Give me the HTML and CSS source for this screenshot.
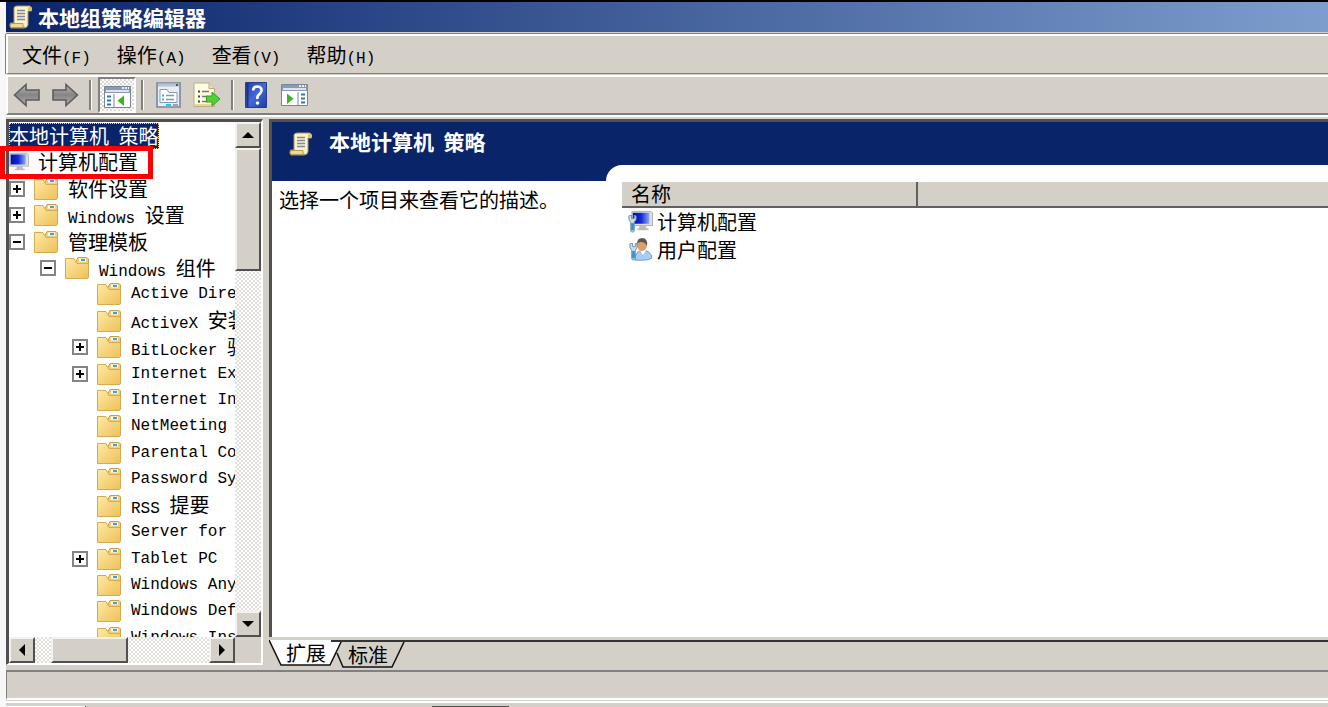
FILE: index.html
```html
<!DOCTYPE html>
<html lang="zh-CN">
<head>
<meta charset="UTF-8">
<meta name="viewport" content="width=device-width, initial-scale=1.0">
<title>本地组策略编辑器</title>
<link rel="stylesheet" href="styles.css">
</head>
<body>
    <!-- Shared icons -->
    <svg class="defs" aria-hidden="true">
        <defs>
            <linearGradient id="gold" x1="0" y1="0" x2="1" y2="1">
                <stop offset="0" stop-color="#ffeaa6"/>
                <stop offset="1" stop-color="#edc057"/>
            </linearGradient>
            <linearGradient id="grey" x1="0" y1="0" x2="0" y2="1">
                <stop offset="0" stop-color="#b8b8b8"/>
                <stop offset="0.5" stop-color="#858585"/>
                <stop offset="1" stop-color="#b0b0b0"/>
            </linearGradient>
            <linearGradient id="blue" x1="0" y1="0" x2="1" y2="1">
                <stop offset="0" stop-color="#1b3fae"/>
                <stop offset="0.5" stop-color="#4468d8"/>
                <stop offset="1" stop-color="#1d3c9c"/>
            </linearGradient>
            <linearGradient id="screen" x1="0" y1="0" x2="1" y2="0">
                <stop offset="0" stop-color="#0010b0"/>
                <stop offset="0.5" stop-color="#1028d8"/>
                <stop offset="1" stop-color="#8fa8f4"/>
            </linearGradient>
        </defs>
        <symbol id="folder" viewBox="0 0 24 22">
            <path d="M11 4.500 L13 0.500 H22 L23.500 2 V19 H11Z" fill="#f0cf78" stroke="#c9a04a"/>
            <path d="M14 3h7" stroke="#fff" stroke-width="3"/>
            <path d="M16 3h4" stroke="#3f9fe0" stroke-width="2"/>
            <path d="M0.500 1.500H9L12 6.500H23.500V20.500L22.500 21.500H0.500Z" fill="url(#gold)" stroke="#d5aa50"/>
        </symbol>
        <symbol id="scroll" viewBox="0 0 24 24">
            <path d="M5 2.500Q6 1 8 1H21Q23.500 2 22.500 6H19V20Q18 23 15 23H2Q0 21 1.500 18H5Z" fill="#fbf2c8" stroke="#a8966a"/>
            <path d="M19 6V3Q20 1 22 2Q24 4 22 6Z" fill="#d8c078"/>
            <path d="M2 18.500H14Q13 22 16 22.500H2Q0.500 21 2 18.500Z" fill="#efd995" stroke="#b39b60"/>
            <path d="M8 5.500h8M8 8.500h8M8 11.500h8M8 14.500h8" stroke="#7f88a5" stroke-width="1.400"/>
        </symbol>
        <symbol id="monitor" viewBox="0 0 24 22">
            <path d="M1 0.500H21L23.500 2V16H1Z" fill="#dedede" stroke="#aaa"/>
            <path d="M2 2H20V14H2Z" fill="url(#screen)"/>
            <path d="M9 16h7l1 3h2v2H7v-2h2Z" fill="#bdbdbd"/>
        </symbol>
        <symbol id="wrench" viewBox="0 0 10 20">
            <path d="M1 1v4l2 3v9q0 2 2 2t2-2V8l2-3V1L7 0v4H4V0Z" fill="#c9dce8" stroke="#72899a"/>
            <path d="M5 9v8" stroke="#2d8fd8" stroke-width="3"/>
        </symbol>
    </svg>

    <div class="window">
        <header class="title-bar">
            <svg class="icon-24"><use href="#scroll"/></svg>
            <h1>本地组策略编辑器</h1>
        </header>

        <nav class="menu-bar">
            <button>文件<span class="en">(F)</span></button>
            <button>操作<span class="en">(A)</span></button>
            <button>查看<span class="en">(V)</span></button>
            <button>帮助<span class="en">(H)</span></button>
        </nav>

        <div class="tool-bar">
            <button class="tool" aria-label="后退">
                <svg width="28" height="26" viewBox="0 0 28 26"><path d="M1.500 13 L13 2.500V8H26V18H13V23.500Z" fill="url(#grey)" stroke="#5c5c5c" stroke-width="1.600"/></svg>
            </button>
            <button class="tool forward" aria-label="前进">
                <svg width="28" height="26" viewBox="0 0 28 26"><path d="M26.500 13 L15 2.500V8H2V18H15V23.500Z" fill="url(#grey)" stroke="#5c5c5c" stroke-width="1.600"/></svg>
            </button>
            <span class="separator"></span>
            <button class="tool pressed" aria-label="显示/隐藏控制台树">
                <svg width="27" height="22" viewBox="0 0 27 22">
                    <path d="M0.500 0.500H26.500V21.500H0.500Z" fill="#fff" stroke="#78869a"/>
                    <path d="M1 1H26V7H1Z" fill="#8a9ab2"/>
                    <path d="M2 5H25" stroke="#dce4ee" stroke-width="2"/>
                    <path d="M18 2h2M21 2h2M24 2h1" stroke="#e8f0fa" stroke-width="2"/>
                    <path d="M10 8V21" stroke="#78869a"/>
                    <path d="M3 10.500h4M3 14.500h4M3 18.500h4" stroke="#2d74c8" stroke-width="2"/>
                    <path d="M20 9.500V20L13.500 14.700Z" fill="#3bb51f"/>
                </svg>
            </button>
            <span class="separator"></span>
            <button class="tool properties" aria-label="属性">
                <svg width="25" height="26" viewBox="0 0 25 26">
                    <path d="M1 1H24V25H1Z" fill="#e6edf6" stroke="#78869a" stroke-width="1.600"/>
                    <path d="M2 3H23" stroke="#b4c2d4" stroke-width="3"/>
                    <path d="M20 3h2" stroke="#556" stroke-width="2"/>
                    <path d="M4 7.500H11L13 10.500H21V20.500H4Z" fill="#fff" stroke="#8b98b0"/>
                    <path d="M10 13.500h8M10 17.500h8" stroke="#8393b5" stroke-width="1.500"/>
                    <path d="M6 13.500h2M6 17.500h2" stroke="#27b7df" stroke-width="2"/>
                    <path d="M10 23h5" stroke="#20c8ee" stroke-width="2"/><path d="M17 23h5" stroke="#98a5b5" stroke-width="2"/>
                </svg>
            </button>
            <button class="tool export" aria-label="导出列表">
                <svg width="28" height="26" viewBox="0 0 28 26">
                    <path d="M1 1H16L21.500 6.500V24.500H1Z" fill="#fffbe0" stroke="#b9af86"/>
                    <path d="M16 1V6.500H21.500" fill="#e8dfb8" stroke="#b9af86"/>
                    <path d="M2 23H21" stroke="#e8d999" stroke-width="2"/>
                    <path d="M5 9.500h2M5 14.500h2M5 19.500h2" stroke="#444" stroke-width="2"/>
                    <path d="M9 9.500h7M9 14.500h6M9 19.500h6" stroke="#777" stroke-width="1.400"/>
                    <path d="M13.500 14H19V10L27 17L19 24V20H13.500Z" fill="#55cf35" stroke="#37a023"/>
                </svg>
            </button>
            <span class="separator"></span>
            <button class="tool help" aria-label="帮助">
                <svg width="22" height="26" viewBox="0 0 22 26">
                    <path d="M0.500 0.500H21.500V25.500H0.500Z" fill="url(#blue)" stroke="#263e91"/>
                    <path d="M2.500 1V25" stroke="#1c327f" stroke-width="2"/>
                    <path d="M8 8.500Q8.500 4.500 12.500 4.500Q17 5 16.500 9Q16 11 13.500 13Q12 14.500 12.500 17" fill="none" stroke="#fff" stroke-width="2.600"/>
                    <circle cx="12.500" cy="21" r="1.800" fill="#fff"/>
                </svg>
            </button>
            <button class="tool action-pane" aria-label="显示/隐藏操作窗格">
                <svg width="27" height="22" viewBox="0 0 27 22">
                    <path d="M0.500 0.500H26.500V21.500H0.500Z" fill="#fff" stroke="#78869a"/>
                    <path d="M1 1H26V7H1Z" fill="#8a9ab2"/>
                    <path d="M2 5H25" stroke="#dce4ee" stroke-width="2"/>
                    <path d="M18 2h2M21 2h2M24 2h1" stroke="#e8f0fa" stroke-width="2"/>
                    <path d="M17 8V21" stroke="#78869a"/>
                    <path d="M20 10.500h4M20 14.500h4M20 18.500h4" stroke="#2d74c8" stroke-width="2"/>
                    <path d="M6 9.500V20L12.500 14.700Z" fill="#3bb51f"/>
                </svg>
            </button>
        </div>

        <main class="workspace">
            <!-- Console tree -->
            <section class="tree-pane">
                <div class="tree-view">
                    <ul class="tree">
                        <li class="root"><span class="selected">本地计算机<span class="en"> </span>策略</span></li>
                        <li class="computer"><svg class="monitor-icon"><use href="#monitor"/></svg>计算机配置</li>
                        <li><button class="toggle" aria-label="展开"></button><svg class="folder"><use href="#folder"/></svg>软件设置</li>
                        <li><button class="toggle" aria-label="展开"></button><svg class="folder"><use href="#folder"/></svg><span><span class="en">Windows </span>设置</span></li>
                        <li><button class="toggle minus" aria-label="折叠"></button><svg class="folder"><use href="#folder"/></svg>管理模板</li>
                        <li class="level-2"><button class="toggle minus" aria-label="折叠"></button><svg class="folder"><use href="#folder"/></svg><span><span class="en">Windows </span>组件</span></li>
                        <li class="level-3"><span class="no-toggle"></span><svg class="folder"><use href="#folder"/></svg><span class="en">Active Dire</span></li>
                        <li class="level-3"><span class="no-toggle"></span><svg class="folder"><use href="#folder"/></svg><span><span class="en">ActiveX </span>安装</span></li>
                        <li class="level-3"><button class="toggle" aria-label="展开"></button><svg class="folder"><use href="#folder"/></svg><span><span class="en">BitLocker </span>驱</span></li>
                        <li class="level-3"><button class="toggle" aria-label="展开"></button><svg class="folder"><use href="#folder"/></svg><span class="en">Internet Ex</span></li>
                        <li class="level-3"><span class="no-toggle"></span><svg class="folder"><use href="#folder"/></svg><span class="en">Internet In</span></li>
                        <li class="level-3"><span class="no-toggle"></span><svg class="folder"><use href="#folder"/></svg><span class="en">NetMeeting</span></li>
                        <li class="level-3"><span class="no-toggle"></span><svg class="folder"><use href="#folder"/></svg><span class="en">Parental Co</span></li>
                        <li class="level-3"><span class="no-toggle"></span><svg class="folder"><use href="#folder"/></svg><span class="en">Password Sy</span></li>
                        <li class="level-3"><span class="no-toggle"></span><svg class="folder"><use href="#folder"/></svg><span><span class="en">RSS </span>提要</span></li>
                        <li class="level-3"><span class="no-toggle"></span><svg class="folder"><use href="#folder"/></svg><span class="en">Server for</span></li>
                        <li class="level-3"><button class="toggle" aria-label="展开"></button><svg class="folder"><use href="#folder"/></svg><span class="en">Tablet PC</span></li>
                        <li class="level-3"><span class="no-toggle"></span><svg class="folder"><use href="#folder"/></svg><span class="en">Windows Any</span></li>
                        <li class="level-3"><span class="no-toggle"></span><svg class="folder"><use href="#folder"/></svg><span class="en">Windows Def</span></li>
                        <li class="level-3"><span class="no-toggle"></span><svg class="folder"><use href="#folder"/></svg><span class="en">Windows Ins</span></li>
                    </ul>
                </div>
                <div class="scroll-y">
                    <button class="scroll-button" aria-label="向上"><svg width="12" height="6"><path d="M0 6L6 0L12 6Z"/></svg></button>
                    <div class="thumb"></div>
                    <button class="scroll-button" aria-label="向下"><svg width="12" height="6"><path d="M0 0L6 6L12 0Z"/></svg></button>
                </div>
                <div class="scroll-x">
                    <button class="scroll-button" aria-label="向左"><svg width="6" height="12"><path d="M6 0L0 6L6 12Z"/></svg></button>
                    <div class="thumb"></div>
                    <button class="scroll-button" aria-label="向右"><svg width="6" height="12"><path d="M0 0L6 6L0 12Z"/></svg></button>
                </div>
            </section>
            <div class="highlight"></div>

            <!-- Result pane -->
            <section class="result-pane">
                <div class="result-view">
                    <div class="result-title">
                        <svg class="icon-24"><use href="#scroll"/></svg>
                        <h2>本地计算机<span class="en"> </span>策略</h2>
                    </div>
                    <div class="result-body">
                        <p class="description">选择一个项目来查看它的描述。</p>
                        <div class="list">
                            <table>
                                <thead>
                                    <tr><th class="name-column" scope="col">名称</th><th></th></tr>
                                </thead>
                                <tbody>
                                    <tr><td colspan="2"><div class="item">
                                        <svg width="26" height="24" viewBox="0 0 26 24"><use href="#monitor" x="3" width="22" height="22"/><use href="#wrench" y="5" width="9" height="18"/></svg>计算机配置
                                    </div></td></tr>
                                    <tr><td colspan="2"><div class="item">
                                        <svg width="26" height="24" viewBox="0 0 26 24">
                                            <path d="M7 22Q7 13 15 12Q23 13 24 20Q20 23 7 22Z" fill="#a7cdf2" stroke="#729fc8"/>
                                            <path d="M12 12L15 17L18 12Z" fill="#fff"/>
                                            <ellipse cx="14" cy="7" rx="5" ry="6" fill="#d99f6e"/>
                                            <path d="M9 6Q9 0 14 0Q20 0 19 8Q17 4 13 4Q10 4 9 6Z" fill="#64564a"/>
                                            <use href="#wrench" x="1" y="5" width="9" height="18"/>
                                        </svg>用户配置
                                    </div></td></tr>
                                </tbody>
                            </table>
                        </div>
                    </div>
                </div>
                <div class="tabs">
                    <button class="tab">
                        <svg width="74" height="26" viewBox="0 0 74 26"><path d="M0 0L12 25H61L73 0" fill="#fff"/><path d="M0 0L12 25H61L73 0" fill="none" stroke="#111" stroke-width="1.500"/></svg>
                        <span>扩展</span>
                    </button>
                    <button class="tab second">
                        <svg width="74" height="26" viewBox="0 0 74 26"><path d="M6 11L12 25H61L73 0" fill="none" stroke="#111" stroke-width="1.500"/></svg>
                        <span>标准</span>
                    </button>
                    <div class="tabs-rest"></div>
                </div>
            </section>
        </main>

        <footer class="status-bar"></footer>
        <div class="bottom-strip"><span class="light"></span><span class="dark"></span></div>
    </div>
</body>
</html>
```
FILE: styles.css
```css
* {
    box-sizing: border-box;
}

body, html {
    height: 100%;
    margin: 0;
    overflow: hidden;
}

body {
    background: #f7f7f7;
    color: #000;
    font-family: "Noto Sans CJK SC", sans-serif;
    font-size: 20px;
    line-height: 26px;
    border-top: 2px solid #000;
}

button {
    font: inherit;
    color: inherit;
    background: none;
    border: none;
    padding: 0;
    margin: 0;
}

svg {
    display: block;
    flex-shrink: 0;
}

h1, h2, p, ul {
    margin: 0;
    padding: 0;
}

h1, h2 {
    font-size: 21px;
    line-height: 26px;
    font-weight: bold;
}

/* Half-width text */
.en {
    font-family: "Liberation Mono", monospace;
    font-size: 16px;
    line-height: 20px;
    white-space: pre;
}

.defs {
    position: absolute;
    width: 0;
    height: 0;
}

.icon-24 {
    width: 24px;
    height: 24px;
}

.window {
    display: flex;
    flex-direction: column;
    height: 100%;
    margin-left: 6px;
    background: #d4d0c8;
}

/* Title bar */
.title-bar {
    display: flex;
    align-items: center;
    gap: 5px;
    height: 30px;
    padding: 0 3px;
    color: #fff;
    background: linear-gradient(to right, #0a246a, #7d9ecd);
}

/* Menu and toolbar */
.menu-bar {
    display: flex;
    align-items: center;
    gap: 26px;
    height: 40px;
    margin-top: 2px;
    padding: 2px 14px 0;
    border: 2px solid #fff;
    border-width: 2px 0 0 2px;
    border-bottom: 1px solid #808080;
    box-shadow: 0 -1px #808080, -1px 0 #808080;
}

.tool-bar {
    display: flex;
    align-items: center;
    height: 40px;
    margin-top: 1px;
    padding-left: 5px;
    border-top: 2px solid #fff;
    border-left: 2px solid #fff;
    border-bottom: 2px solid #808080;
    box-shadow: 0 2px #fff;
}

.forward {
    margin-left: 10px;
}

.separator {
    width: 3px;
    height: 30px;
    margin-left: 10px;
    border-left: 2px solid #808080;
    border-right: 1px solid #fff;
}

.pressed {
    display: flex;
    align-items: center;
    justify-content: center;
    width: 38px;
    height: 36px;
    margin-left: 6px;
    padding-top: 4px;
    border: 2px solid #fff;
    border-top-color: #808080;
    border-left-color: #808080;
    background: repeating-conic-gradient(#fff 0 25%, #dedbd5 0 50%) 0 0 / 4px 4px;
}

.pressed + .separator {
    margin-left: 5px;
}

.properties,
.export {
    margin-left: 12px;
}

.help {
    margin-left: 11px;
}

.action-pane {
    margin-left: 14px;
}

/* Panes */
.workspace {
    position: relative;
    display: flex;
    flex: 1;
    gap: 6px;
    min-height: 0;
    margin-top: 4px;
}

.tree-pane {
    display: grid;
    grid-template-columns: 1fr 26px;
    grid-template-rows: 1fr 26px;
    width: 257px;
    border: 2px solid #fff;
    border-top: 3px solid #505050;
    border-left: 3px solid #505050;
}

.tree-view {
    min-width: 0;
    min-height: 0;
    overflow: hidden;
    background: #fff;
}

.tree {
    display: flex;
    flex-direction: column;
    justify-content: space-between;
    height: 529px;
    padding-top: 1px;
    list-style: none;
}

.tree li {
    display: flex;
    align-items: center;
    gap: 9px;
    height: 26px;
    white-space: nowrap;
}

.tree .level-2 {
    padding-left: 31px;
}

.tree .level-3 {
    padding-left: 63px;
}

.selected {
    height: 26px;
    color: #fff;
    background: #0a246a;
    outline: 1px dotted #f5db95;
    outline-offset: -1px;
}

.monitor-icon {
    width: 20px;
    height: 20px;
}

.folder {
    width: 24px;
    height: 22px;
    margin-right: 1px;
}

.toggle,
.no-toggle {
    width: 16px;
    height: 16px;
    flex-shrink: 0;
}

.toggle {
    border: 2px solid #848484;
    background: linear-gradient(#000, #000) center / 8px 2px no-repeat,
        linear-gradient(#000, #000) center / 2px 8px no-repeat, #fff;
}

.minus {
    background: linear-gradient(#000, #000) center / 8px 2px no-repeat, #fff;
}

/* Scroll bars */
.scroll-y,
.scroll-x {
    display: flex;
    background: repeating-conic-gradient(#fff 0 25%, #e2dfda 0 50%) 0 0 / 4px 4px;
}

.scroll-y {
    flex-direction: column;
}

.scroll-y .thumb {
    height: 123px;
    margin-bottom: auto;
}

.scroll-x .thumb {
    width: 77px;
    margin: 0 auto 0 16px;
}

.scroll-button,
.thumb {
    background: #d4d0c8;
    border: 2px solid #505050;
    border-top-color: #f4f2ee;
    border-left-color: #f4f2ee;
}

.scroll-button {
    display: flex;
    align-items: center;
    justify-content: center;
    width: 26px;
    height: 26px;
}

/* Red frame over the computer node */
.highlight {
    position: absolute;
    top: 27px;
    left: -6px;
    width: 153px;
    height: 33px;
    border: 5px solid #f00;
}

.result-pane {
    display: flex;
    flex: 1;
    flex-direction: column;
    min-width: 0;
}

.result-view {
    display: flex;
    flex: 1;
    flex-direction: column;
    border-top: 3px solid #505050;
    border-left: 3px solid #505050;
    background: #fff;
}

.result-title {
    display: flex;
    align-items: center;
    gap: 16px;
    height: 43px;
    padding: 0 17px;
    color: #fff;
    background: #0a246a;
}

.result-title h2 {
    padding-bottom: 4px;
}

.result-body {
    display: flex;
    flex: 1;
    background: linear-gradient(#0a246a 16px, #fff 16px);
}

.description {
    width: 334px;
    padding: 22px 0 0 7px;
}

.list {
    flex: 1;
    padding: 17px 0 0 16px;
    background: #fff;
    border-top-left-radius: 16px;
}

.list table {
    width: 100%;
    table-layout: fixed;
    border-collapse: separate;
    border-spacing: 0;
}

.list th {
    height: 26px;
    padding: 0 9px;
    text-align: left;
    font-weight: normal;
    line-height: 22px;
    background: #d4d0c8;
    border-bottom: 2px solid #606060;
}

.list .name-column {
    width: 296px;
    border-right: 2px solid #606060;
}

.list td {
    padding: 0;
}

.item {
    display: flex;
    align-items: center;
    gap: 3px;
    height: 28px;
    padding-left: 6px;
}

/* View tabs */
.tabs {
    display: flex;
    height: 28px;
    padding-top: 3px;
}

.tab {
    position: relative;
    width: 62px;
    height: 26px;
    padding-left: 12px;
}

.tab svg {
    position: absolute;
    top: 0;
    left: 0;
}

.tab span {
    position: relative;
}

.second {
    width: 74px;
    padding: 0;
    border-top: 2px solid #333;
}

.tabs-rest {
    flex: 1;
    height: 2px;
    background: #333;
}

.status-bar {
    height: 30px;
    margin-top: 5px;
    border-top: 2px solid #808080;
    border-left: 1px solid #808080;
    border-bottom: 2px solid #fff;
}

.bottom-strip {
    display: flex;
    align-items: flex-end;
    height: 6px;
    margin-top: 1px;
    border-top: 2px solid #fff;
}

.bottom-strip .light {
    width: 80px;
    height: 1px;
    background: #fff;
    border-right: 1px solid #404040;
}

.bottom-strip .dark {
    width: 77px;
    height: 1px;
    margin-left: 346px;
    background: #505050;
}
```
